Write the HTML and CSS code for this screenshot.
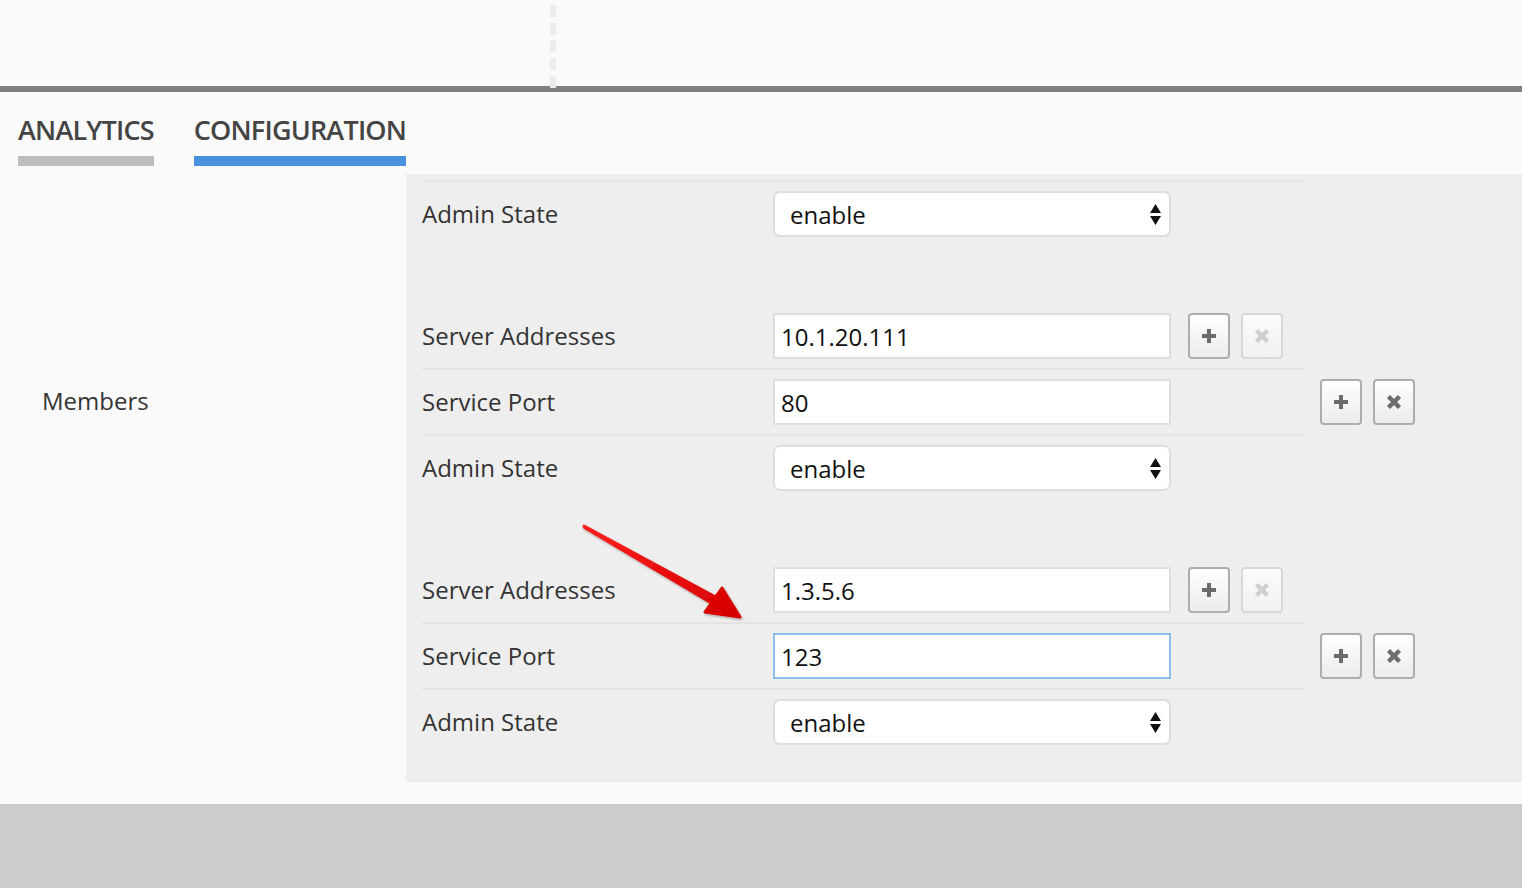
FILE: index.html
```html
<!DOCTYPE html>
<html>
<head>
<meta charset="utf-8">
<title>Configuration</title>
<link rel="stylesheet" href="styles.css">
</head>
<body>
<div class="top"><div class="dashes"></div></div>
<div class="rule"></div>
<nav class="tabs">
  <a class="tab">ANALYTICS</a>
  <a class="tab active">CONFIGURATION</a>
</nav>
<main class="content">
  <div class="side"><span class="side-label">Members</span></div>
  <div class="panel">
    <div class="group">
      <div class="rows">
        <div class="row divided">
          <span class="label">Admin State</span>
          <div class="field select"><span>enable</span><svg class="updown" width="11" height="21" viewBox="0 0 11 21"><path d="M0 9L5.5 0L11 9Z M0 12H11L5.5 21Z" fill="#111"/></svg></div>
        </div>
      </div>
    </div>

    <div class="group">
      <div class="rows">
        <div class="row">
          <span class="label">Server Addresses</span>
          <input class="field" type="text" value="10.1.20.111">
          <div class="actions inline">
            <button class="btn"><svg width="16" height="16" viewBox="0 0 16 16"><path d="M6 1h4v5h5v4h-5v5H6v-5H1V6h5z" fill="#6b6b6b"/></svg></button>
            <button class="btn disabled"><svg width="16" height="16" viewBox="0 0 16 16"><path d="M2.5 2.5L13.5 13.5M13.5 2.5L2.5 13.5" stroke="#cfcfcf" stroke-width="4.5"/></svg></button>
          </div>
        </div>
        <div class="row divided">
          <span class="label">Service Port</span>
          <input class="field" type="text" value="80">
        </div>
        <div class="row divided">
          <span class="label">Admin State</span>
          <div class="field select"><span>enable</span><svg class="updown" width="11" height="21" viewBox="0 0 11 21"><path d="M0 9L5.5 0L11 9Z M0 12H11L5.5 21Z" fill="#111"/></svg></div>
        </div>
      </div>
      <div class="actions">
        <button class="btn"><svg width="16" height="16" viewBox="0 0 16 16"><path d="M6 1h4v5h5v4h-5v5H6v-5H1V6h5z" fill="#6b6b6b"/></svg></button>
        <button class="btn"><svg width="16" height="16" viewBox="0 0 16 16"><path d="M2.5 2.5L13.5 13.5M13.5 2.5L2.5 13.5" stroke="#6e6e6e" stroke-width="4.5"/></svg></button>
      </div>
    </div>

    <div class="group">
      <div class="rows">
        <div class="row">
          <span class="label">Server Addresses</span>
          <input class="field" type="text" value="1.3.5.6">
          <div class="actions inline">
            <button class="btn"><svg width="16" height="16" viewBox="0 0 16 16"><path d="M6 1h4v5h5v4h-5v5H6v-5H1V6h5z" fill="#6b6b6b"/></svg></button>
            <button class="btn disabled"><svg width="16" height="16" viewBox="0 0 16 16"><path d="M2.5 2.5L13.5 13.5M13.5 2.5L2.5 13.5" stroke="#cfcfcf" stroke-width="4.5"/></svg></button>
          </div>
        </div>
        <div class="row divided">
          <span class="label">Service Port</span>
          <input class="field focused" type="text" value="123">
        </div>
        <div class="row divided">
          <span class="label">Admin State</span>
          <div class="field select"><span>enable</span><svg class="updown" width="11" height="21" viewBox="0 0 11 21"><path d="M0 9L5.5 0L11 9Z M0 12H11L5.5 21Z" fill="#111"/></svg></div>
        </div>
      </div>
      <div class="actions">
        <button class="btn"><svg width="16" height="16" viewBox="0 0 16 16"><path d="M6 1h4v5h5v4h-5v5H6v-5H1V6h5z" fill="#6b6b6b"/></svg></button>
        <button class="btn"><svg width="16" height="16" viewBox="0 0 16 16"><path d="M2.5 2.5L13.5 13.5M13.5 2.5L2.5 13.5" stroke="#6e6e6e" stroke-width="4.5"/></svg></button>
      </div>
    </div>
  </div>
</main>
<footer class="footer"></footer>

<svg class="annotation" width="170" height="110" viewBox="0 0 170 110">
  <defs>
    <linearGradient id="ag" x1="0" y1="0" x2="1" y2="1">
      <stop offset="0" stop-color="#ff2020"/>
      <stop offset="1" stop-color="#d40000"/>
    </linearGradient>
    <filter id="sh" x="-10%" y="-10%" width="130%" height="130%">
      <feDropShadow dx="1" dy="1.5" stdDeviation="1.2" flood-color="#000" flood-opacity="0.3"/>
    </filter>
  </defs>
  <path d="M4 6 L135.5 77.1 L142 68 L160 97 L125 92 L131.5 82.9 L4.5 7.5 Z" fill="url(#ag)" stroke="url(#ag)" stroke-width="3" stroke-linejoin="round" filter="url(#sh)"/>
</svg>
</body>
</html>
```

FILE: styles.css
```css
* { box-sizing: border-box; }
html, body { margin: 0; padding: 0; }
body {
  background: #fafafa;
  font-family: "Open Sans", "DejaVu Sans", sans-serif;
  color: #333;
  overflow: hidden;
  width: 1522px;
  height: 888px;
}

.top {
  height: 86px;
  padding: 5px 0 0 550px;
}
.dashes {
  position: relative;
  width: 6px;
  height: 83px;
  background: repeating-linear-gradient(to bottom, #ececec 0 12px, transparent 12px 17.75px);
}
.rule {
  height: 6px;
  background: #808080;
}

.tabs {
  display: flex;
  gap: 40px;
  padding: 21px 0 0 18px;
  margin-bottom: 8px;
}
.tab {
  font-size: 27px;
  font-weight: 600;
  letter-spacing: -0.8px;
  line-height: 34px;
  color: #444;
  padding-bottom: 9px;
  border-bottom: 10px solid #bdbdbd;
}
.tab.active {
  border-bottom-color: #4a90dc;
}

.content {
  display: flex;
}
.side {
  width: 406px;
  flex: none;
  padding: 212px 0 0 42px;
  font-size: 24px;
  line-height: 30px;
  color: #333;
}
.panel {
  flex: 1;
  background: #eee;
  padding: 6px 0 28px 16px;
}
.group {
  display: flex;
  align-items: center;
}
.group + .group {
  margin-top: 58px;
}
.rows {
  width: 882px;
  flex: none;
}
.row {
  display: flex;
  align-items: center;
  padding: 9px 0;
}
.row.divided {
  border-top: 2px solid #e3e3e3;
}
.label {
  width: 351px;
  flex: none;
  font-size: 24px;
  line-height: 30px;
  color: #333;
}
.field {
  width: 398px;
  height: 46px;
  flex: none;
  border: 2px solid #dedede;
  background: #fff;
  font-family: "Open Sans", "DejaVu Sans", sans-serif;
  font-size: 24px;
  color: #111;
  padding: 0 6px;
  margin: 0;
  outline: none;
  border-radius: 0;
}
.field.focused {
  border-color: #8ebdf0;
}
.select {
  display: flex;
  align-items: center;
  justify-content: space-between;
  border-radius: 7px;
  padding: 0 8px 0 15px;
}
.updown { display: block; }

.actions {
  display: flex;
  gap: 11px;
  margin-left: 16px;
}
.actions.inline {
  margin-left: 17px;
}
.btn {
  width: 42px;
  height: 46px;
  padding: 0;
  border: 2px solid #adadad;
  border-radius: 4px;
  background: linear-gradient(#ffffff, #ececec);
  display: flex;
  align-items: center;
  justify-content: center;
}
.btn.disabled {
  border-color: #d8d8d8;
  background: linear-gradient(#fbfbfb, #f1f1f1);
}
.btn svg { display: block; }

.footer {
  margin-top: 22px;
  height: 84px;
  background: #ccc;
}

.annotation {
  position: absolute;
  left: 580px;
  top: 520px;
}
```
